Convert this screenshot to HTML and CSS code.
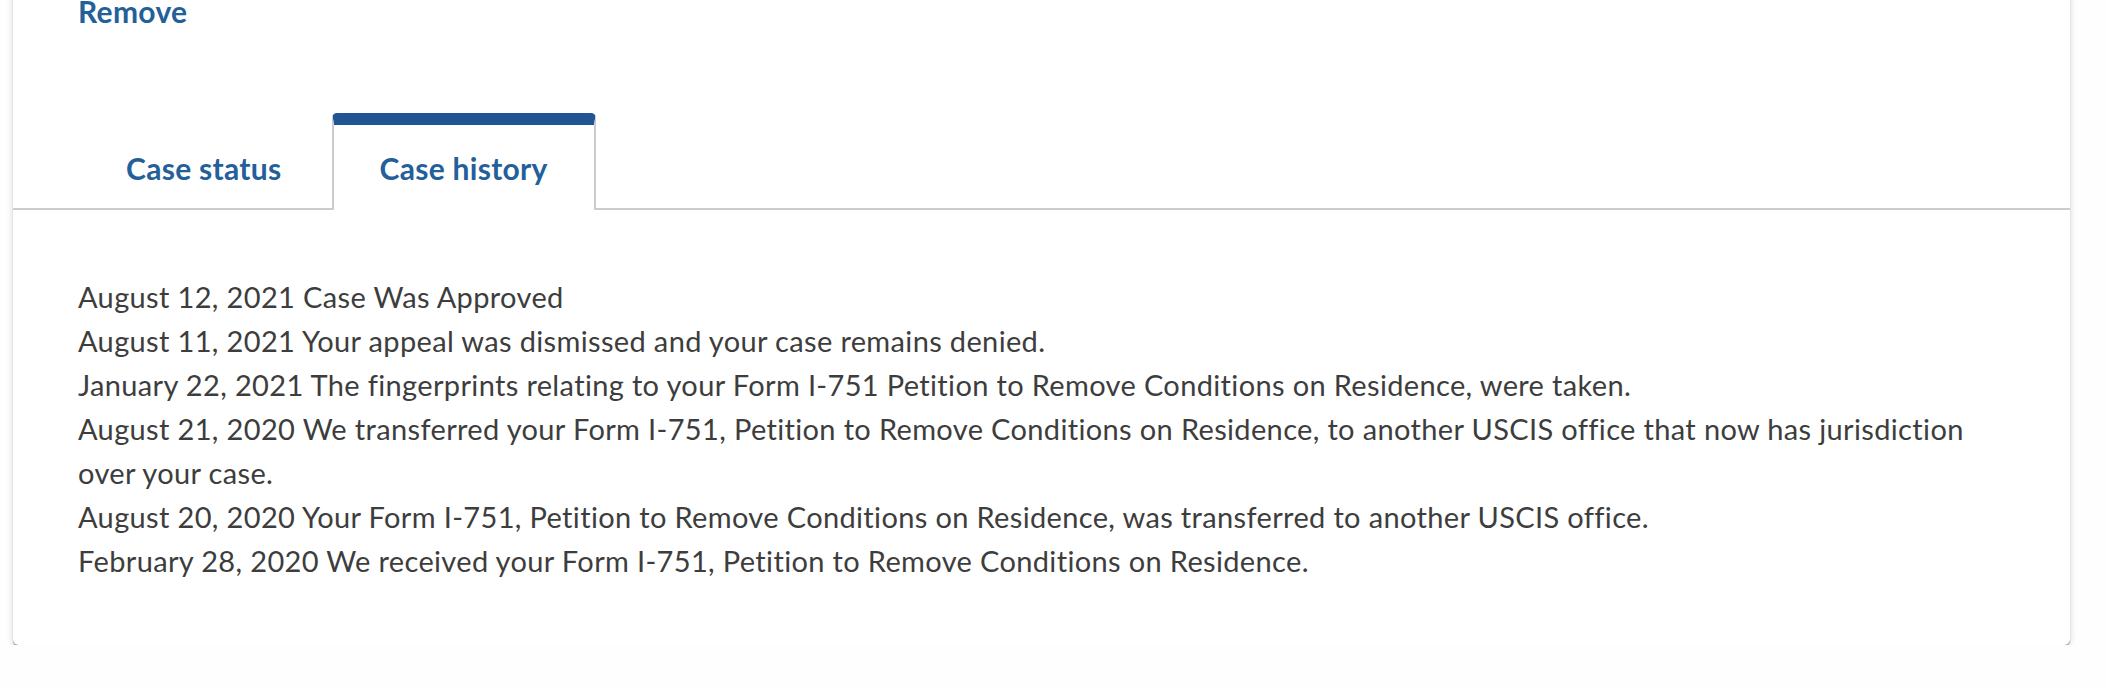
FILE: index.html
```html
<!DOCTYPE html>
<html lang="en">

<head>
    <meta charset="UTF-8">
    <meta name="viewport" content="width=device-width, initial-scale=1.0">
    <title>Case history</title>
    <link rel="stylesheet" href="styles.css">
</head>

<body>
    <div class="card">
        <div class="card-top">
            <a href="#" class="remove">Remove</a>
        </div>

        <ul class="tabs">
            <li class="tab"><a href="#">Case status</a></li>
            <li class="tab active"><a href="#">Case history</a></li>
        </ul>

        <ul class="history">
            <li><span class="date">August 12, 2021</span> Case Was Approved</li>
            <li><span class="date">August 11, 2021</span> Your appeal was dismissed and your case remains denied.</li>
            <li><span class="date">January 22, 2021</span> The fingerprints relating to your Form I-751 Petition to Remove Conditions on Residence, were taken.</li>
            <li><span class="date">August 21, 2020</span> We transferred your Form I-751, Petition to Remove Conditions on Residence, to another USCIS office that now has jurisdiction over your case.</li>
            <li><span class="date">August 20, 2020</span> Your Form I-751, Petition to Remove Conditions on Residence, was transferred to another USCIS office.</li>
            <li><span class="date">February 28, 2020</span> We received your Form I-751, Petition to Remove Conditions on Residence.</li>
        </ul>
    </div>
</body>

</html>
```

FILE: styles.css
```css
* {
    margin: 0;
    padding: 0;
    box-sizing: border-box;
}

body {
    background-color: #fefefe;
    font-family: "Source Sans Pro", Lato, "Liberation Sans", sans-serif;
    font-size: 29px;
    line-height: 44px;
    letter-spacing: 0.35px;
    color: #3d3d3d;
    overflow: hidden;
}

a {
    color: #23609a;
    text-decoration: none;
    font-weight: 700;
    font-size: 30px;
    letter-spacing: 0.3px;
}

.card {
    margin: -11px 38px 0 13px;
    background-color: #fff;
    border-radius: 6px;
    box-shadow: 0 2px 1px rgba(0, 0, 0, 0.3), 0 3px 6px rgba(0, 0, 0, 0.12), 0 0 8px rgba(0, 0, 0, 0.05);
}

.card-top {
    padding: 0 65px;
}

.tabs {
    display: flex;
    gap: 2px;
    margin-top: 79px;
    padding: 0 65px;
    list-style: none;
    border-bottom: 2px solid #ccc;
}

.tab {
    height: 97px;
    margin-bottom: -2px;
    padding: 0 46px;
    display: flex;
    align-items: center;
    justify-content: center;
    border: 2px solid transparent;
    border-top-width: 12px;
    border-bottom: none;
    border-radius: 5px 5px 0 0;
}

.tab.active {
    background-color: #fff;
    border-color: #ccc;
    border-top-color: #205493;
}

.history {
    list-style: none;
    padding: 65px 65px 62px;
}
```
